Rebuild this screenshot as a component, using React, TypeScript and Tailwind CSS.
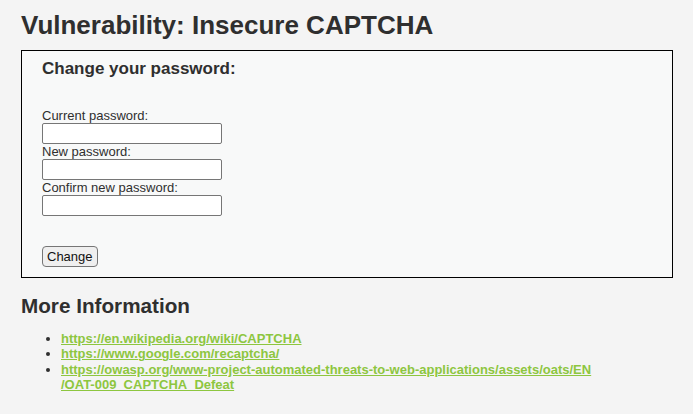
import React from 'react';

export default function App() {
  return (
    <div className="min-h-screen w-full bg-[#f4f4f4] text-[#2f2f2f] font-['Liberation_Sans',Arial,sans-serif] text-[13px]">
      <div className="px-[21px] pt-[10px] w-[673px] box-content">
        <h1 className="text-[26px] font-bold leading-[30px] mb-[10px]">Vulnerability: Insecure CAPTCHA</h1>

        {/* Password change form */}
        <div className="border border-black bg-[#f8f9f9] px-[20px] pt-[8px] pb-[10px] w-[652px]">
          <h3 className="text-[17px] font-bold leading-[20px] mb-[29px]">Change your password:</h3>
          <form className="flex flex-col items-start">
            <label className="leading-[15px]">Current password:</label>
            <input type="password" className="w-[180px] h-[21px] border border-[#767676] rounded-[2px] bg-white" />
            <label className="leading-[15px]">New password:</label>
            <input type="password" className="w-[180px] h-[21px] border border-[#767676] rounded-[2px] bg-white" />
            <label className="leading-[15px]">Confirm new password:</label>
            <input type="password" className="w-[180px] h-[21px] border border-[#767676] rounded-[2px] bg-white" />
            <button type="button" className="mt-[30px] h-[21px] px-[4px] bg-[#efefef] border border-[#767676] rounded-[4px] text-[13px] text-[#111] leading-[15px]">
              Change
            </button>
          </form>
        </div>

        <h2 className="text-[20.7px] font-bold leading-[24px] mt-[16px] mb-[13px]">More Information</h2>
        <ul className="list-disc pl-[40px] font-bold leading-[15.3px]">
          <li><a href="#" className="text-[#8dc63f] underline">https://en.wikipedia.org/wiki/CAPTCHA</a></li>
          <li><a href="#" className="text-[#8dc63f] underline">https://www.google.com/recaptcha/</a></li>
          <li>
            <a href="#" className="text-[#8dc63f] underline">
              https://owasp.org/www-project-automated-threats-to-web-applications/assets/oats/EN<br />/OAT-009_CAPTCHA_Defeat
            </a>
          </li>
        </ul>
      </div>
    </div>
  );
}
